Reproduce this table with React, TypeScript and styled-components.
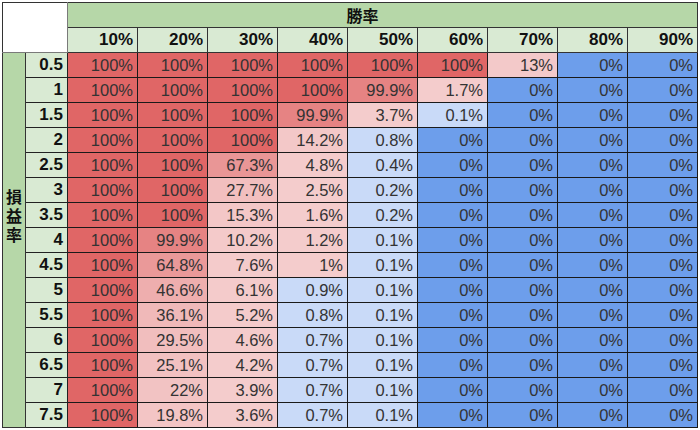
import React from 'react';
import styled, { createGlobalStyle } from 'styled-components';

const GlobalStyle = createGlobalStyle`
  html, body {
    margin: 0;
    padding: 0;
    background: #ffffff;
  }
  body {
    font-family: "Liberation Sans", Arial, "Noto Sans CJK JP", sans-serif;
  }
`;

const Page = styled.div`
  padding: 2px 3px 2px 2px;
`;

const Sheet = styled.table`
  width: 695px;
  table-layout: fixed;
  border-collapse: collapse;
  font-family: "Liberation Sans", Arial, "Noto Sans CJK JP", sans-serif;
`;

const Row = styled.tr`
  height: 25px;
`;

const Corner = styled.td`
  background: #ffffff;
  border: 1px solid #7a7a7a;
  border-top-color: #333;
  border-left-color: #333;
`;

const GroupHead = styled.th`
  background: #b6d7a8;
  border: 1px solid #333;
  font-size: 16px;
  font-weight: bold;
  color: #111;
  text-align: center;
  padding: 0 40px 0 0;
  font-family: "Liberation Sans", Arial, "Noto Sans CJK JP", sans-serif;
`;

const ColHead = styled.th`
  background: #d9ead3;
  border: 1px solid #333;
  font-size: 17px;
  font-weight: bold;
  color: #111;
  text-align: right;
  padding: 0 4px 0 0;
`;

const SideLabel = styled.th`
  background: #b6d7a8;
  border: 1px solid #333;
  font-size: 16px;
  font-weight: bold;
  line-height: 19px;
  color: #111;
  text-align: center;
  vertical-align: middle;
  padding: 0 0 48px 0;
  font-family: "Liberation Sans", Arial, "Noto Sans CJK JP", sans-serif;
`;

const RowHead = styled.th`
  background: #d9ead3;
  border: 1px solid #222;
  font-size: 17px;
  font-weight: bold;
  color: #111;
  text-align: right;
  padding: 0 4px 0 0;
`;

const Cell = styled.td<{ $bg: string }>`
  background: ${(p) => p.$bg};
  border: 1px solid #1a1a1a;
  font-size: 16.5px;
  color: #333;
  text-align: right;
  padding: 0 4px 0 0;
  white-space: nowrap;
`;

const rates = ['10%', '20%', '30%', '40%', '50%', '60%', '70%', '80%', '90%'];

const data: [string, number[]][] = [
  ['0.5', [100, 100, 100, 100, 100, 100, 13, 0, 0]],
  ['1', [100, 100, 100, 100, 99.9, 1.7, 0, 0, 0]],
  ['1.5', [100, 100, 100, 99.9, 3.7, 0.1, 0, 0, 0]],
  ['2', [100, 100, 100, 14.2, 0.8, 0, 0, 0, 0]],
  ['2.5', [100, 100, 67.3, 4.8, 0.4, 0, 0, 0, 0]],
  ['3', [100, 100, 27.7, 2.5, 0.2, 0, 0, 0, 0]],
  ['3.5', [100, 100, 15.3, 1.6, 0.2, 0, 0, 0, 0]],
  ['4', [100, 99.9, 10.2, 1.2, 0.1, 0, 0, 0, 0]],
  ['4.5', [100, 64.8, 7.6, 1, 0.1, 0, 0, 0, 0]],
  ['5', [100, 46.6, 6.1, 0.9, 0.1, 0, 0, 0, 0]],
  ['5.5', [100, 36.1, 5.2, 0.8, 0.1, 0, 0, 0, 0]],
  ['6', [100, 29.5, 4.6, 0.7, 0.1, 0, 0, 0, 0]],
  ['6.5', [100, 25.1, 4.2, 0.7, 0.1, 0, 0, 0, 0]],
  ['7', [100, 22, 3.9, 0.7, 0.1, 0, 0, 0, 0]],
  ['7.5', [100, 19.8, 3.6, 0.7, 0.1, 0, 0, 0, 0]],
];

// 0 -> 青, 1%未満 -> 薄い青, 1%以上 -> 薄いピンクから赤へ
function cellColor(v: number): string {
  if (v === 0) return '#6d9eeb';
  if (v < 1) return '#c9daf8';
  const light = [244, 204, 204];
  const red = [224, 102, 102];
  let t = Math.pow((v - 1) / 99, 1.6);
  if (v < 100) t = Math.min(t, 0.72);
  const c = light.map((l, i) => Math.round(l + (red[i] - l) * t));
  return `rgb(${c[0]}, ${c[1]}, ${c[2]})`;
}

export default function App() {
  return (
    <>
      <GlobalStyle />
      <Page>
        <Sheet>
          <colgroup>
            <col style={{ width: 23 }} />
            <col style={{ width: 42 }} />
            {rates.map((r) => (
              <col key={r} style={{ width: 70 }} />
            ))}
          </colgroup>
          <tbody>
            <Row>
              <Corner rowSpan={2} colSpan={2} />
              <GroupHead colSpan={9}>勝率</GroupHead>
            </Row>
            <Row>
              {rates.map((r) => (
                <ColHead key={r}>{r}</ColHead>
              ))}
            </Row>
            {data.map(([label, values], i) => (
              <Row key={label}>
                {i === 0 && (
                  <SideLabel rowSpan={data.length}>
                    損<br />益<br />率
                  </SideLabel>
                )}
                <RowHead>{label}</RowHead>
                {values.map((v, j) => (
                  <Cell key={j} $bg={cellColor(v)}>
                    {v}%
                  </Cell>
                ))}
              </Row>
            ))}
          </tbody>
        </Sheet>
      </Page>
    </>
  );
}
